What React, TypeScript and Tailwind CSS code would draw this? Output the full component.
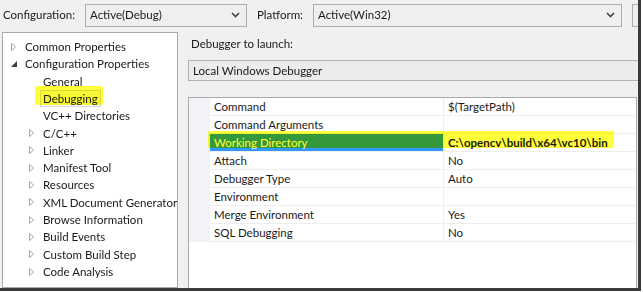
import React from "react";

type TreeItem = {
  label: string;
  level: number;
  icon?: "collapsed" | "expanded";
  selected?: boolean;
};

const treeItems: TreeItem[] = [
  { label: "Common Properties", level: 0, icon: "collapsed" },
  { label: "Configuration Properties", level: 0, icon: "expanded" },
  { label: "General", level: 1 },
  { label: "Debugging", level: 1, selected: true },
  { label: "VC++ Directories", level: 1 },
  { label: "C/C++", level: 1, icon: "collapsed" },
  { label: "Linker", level: 1, icon: "collapsed" },
  { label: "Manifest Tool", level: 1, icon: "collapsed" },
  { label: "Resources", level: 1, icon: "collapsed" },
  { label: "XML Document Generator", level: 1, icon: "collapsed" },
  { label: "Browse Information", level: 1, icon: "collapsed" },
  { label: "Build Events", level: 1, icon: "collapsed" },
  { label: "Custom Build Step", level: 1, icon: "collapsed" },
  { label: "Code Analysis", level: 1, icon: "collapsed" },
];

const properties = [
  { name: "Command", value: "$(TargetPath)" },
  { name: "Command Arguments", value: "" },
  { name: "Working Directory", value: "C:\\opencv\\build\\x64\\vc10\\bin", selected: true },
  { name: "Attach", value: "No" },
  { name: "Debugger Type", value: "Auto" },
  { name: "Environment", value: "" },
  { name: "Merge Environment", value: "Yes" },
  { name: "SQL Debugging", value: "No" },
];

const Chevron = () => (
  <svg width="9" height="6" viewBox="0 0 9 6">
    <path d="M1 1l3.5 3.5L8 1" fill="none" stroke="#444" strokeWidth="1.6" />
  </svg>
);

const Collapsed = () => (
  <svg width="5" height="8" viewBox="0 0 5 8">
    <path d="M0.5 0.5v7l4-3.5z" fill="none" stroke="#a6a6a6" strokeWidth="1" />
  </svg>
);

const Expanded = () => (
  <svg width="6" height="6" viewBox="0 0 6 6">
    <path d="M6 0v6H0z" fill="#3c3c3c" />
  </svg>
);

const Dropdown = ({ text, className }: { text: string; className: string }) => (
  <div
    className={`h-[23px] shrink-0 flex items-center justify-between border border-[#adadad] bg-[#efefef] pl-[4px] pr-[6px] ${className}`}
  >
    <span>{text}</span>
    <Chevron />
  </div>
);

export default function App() {
  return (
    <div className="w-[643px] h-[292px] bg-white overflow-hidden font-['Lato','Segoe_UI',sans-serif] text-[11.5px] text-[#1a1a1a]">
      <div className="w-[641px] h-[291px] bg-[#f0f0f0] border-r-[3px] border-b-[3px] border-[#3a3a3a] flex flex-col overflow-hidden">
        {/* configuration bar */}
        <div className="h-[32px] shrink-0 flex items-center pl-[3px] pb-[2px]">
          <span className="w-[82px] shrink-0">Configuration:</span>
          <Dropdown text="Active(Debug)" className="w-[162px]" />
          <span className="w-[56px] shrink-0 ml-[10px]">Platform:</span>
          <Dropdown text="Active(Win32)" className="w-[309px]" />
          <div className="w-[20px] h-[23px] ml-[10px] shrink-0 border border-[#adadad] bg-[#efefef]" />
        </div>

        <div className="flex flex-1 min-h-0">
          {/* tree */}
          <div className="relative w-[176px] ml-[2px] shrink-0 bg-white border border-[#a9a9a9] pt-[5px]">
            {treeItems.map((item) => (
              <div
                key={item.label}
                className="flex items-center h-[17.3px] whitespace-nowrap"
                style={{ paddingLeft: item.level * 18 }}
              >
                <div className="w-[22px] shrink-0 flex items-center pl-[8px]">
                  {item.icon === "collapsed" && <Collapsed />}
                  {item.icon === "expanded" && <Expanded />}
                </div>
                <span
                  className={
                    item.selected
                      ? "-ml-[3px] px-[2px] border border-[#d9d9d9] bg-[#f7f7f7] leading-[15px]"
                      : ""
                  }
                >
                  {item.label}
                </span>
              </div>
            ))}
            <div className="absolute left-[32px] top-[53px] w-[68px] h-[19px] bg-[#ffff3a] mix-blend-multiply rounded-[2px]" />
          </div>

          {/* debugger page */}
          <div className="flex-1 ml-[10px] flex flex-col">
            <div className="h-[24px] flex items-center pl-[3px]">Debugger to launch:</div>
            <div className="h-[21px] mt-[4px] border border-[#b2b2b2] bg-[#ececec] flex items-center pl-[4px] -mr-[4px]">
              Local Windows Debugger
            </div>
            <div className="relative flex-1 mt-[16px] mr-[1px] bg-white border border-[#a9a9a9] border-b-0">
              {properties.map((p) => (
                <div key={p.name} className="flex h-[18px]">
                  <div className="w-[21px] shrink-0 bg-[#f1f3f7]" />
                  <div
                    className={`w-[234px] shrink-0 border-b border-r border-[#eeeeee] pl-[4px] flex items-center ${
                      p.selected ? "bg-[#3399ff] text-white" : ""
                    }`}
                  >
                    {p.name}
                  </div>
                  <div
                    className={`flex-1 border-b border-[#eeeeee] pl-[4px] flex items-center ${
                      p.selected ? "font-bold" : ""
                    }`}
                  >
                    {p.value}
                  </div>
                </div>
              ))}
              <div className="absolute left-[19px] top-[33px] w-[406px] h-[17px] bg-[#ffff3a] mix-blend-multiply rounded-[2px]" />
            </div>
          </div>
        </div>
      </div>
    </div>
  );
}
